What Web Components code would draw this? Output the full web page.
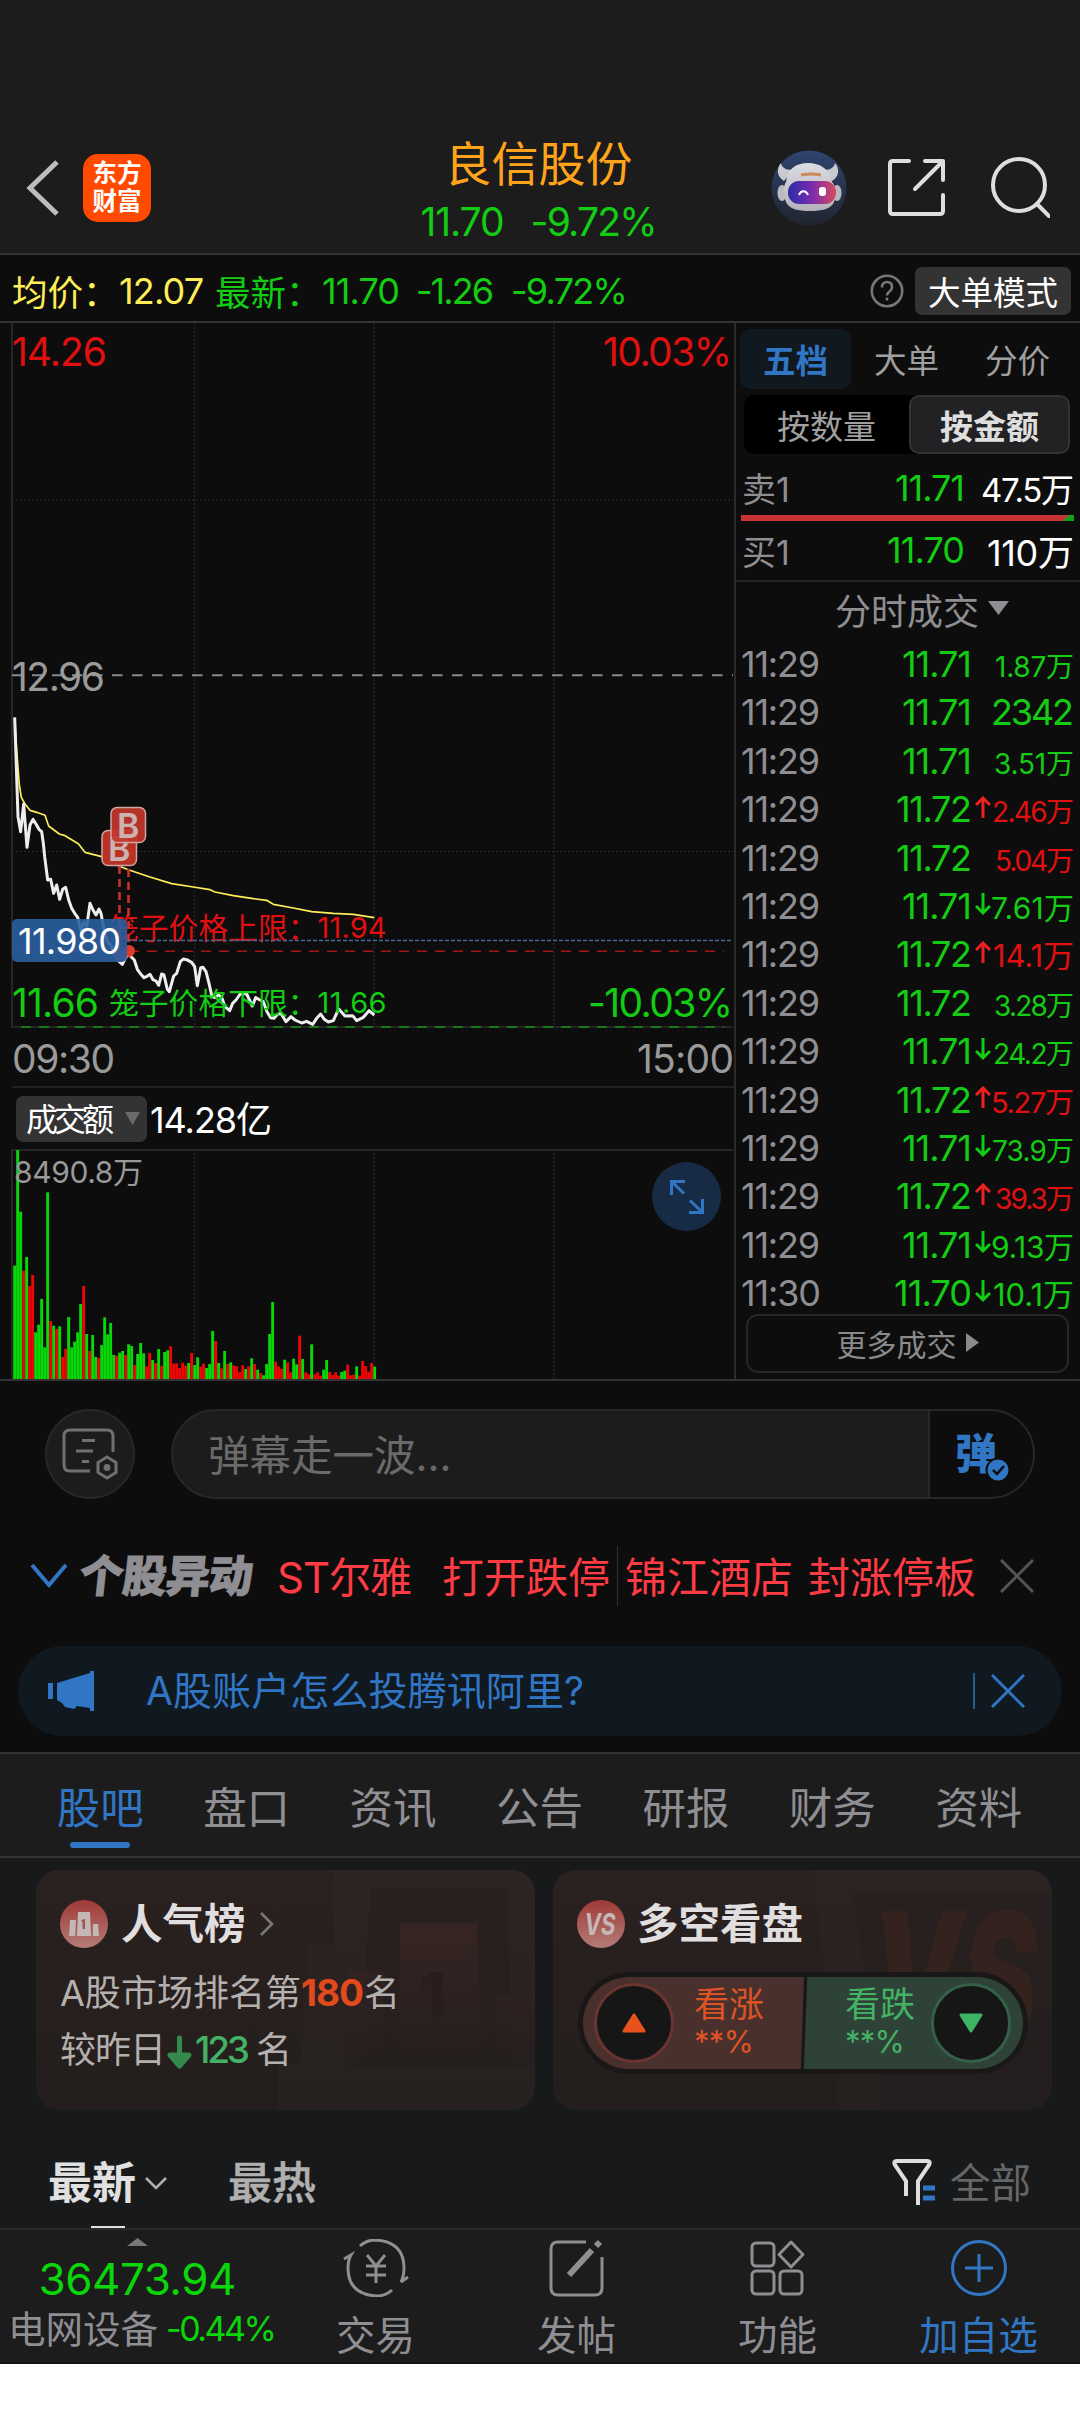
<!DOCTYPE html>
<html lang="zh-CN">
<head>
<meta charset="utf-8">
<title>良信股份</title>
<style>
  body {
    margin: 0;
    background: #fff;
    font-family: Inter, "Noto Sans CJK SC", sans-serif;
    --up: #e01010;
    --down: #14cc14;
    --blue: #3176c4;
    --line: #333;
    --grey: #8e8e93;
  }
</style>
</head>
<body>
<stock-page></stock-page>

<script>
const base = `
  :host { display: block; box-sizing: border-box; }
  * { box-sizing: border-box; }
  svg { display: block; flex: none; }
  fit-text, span { flex: none; white-space: nowrap; }
`;

function define(name, css, html) {
  const template = document.createElement('template');
  template.innerHTML = `<style>${base}${css}</style>${html}`;

  customElements.define(name, class extends HTMLElement {
    constructor() {
      super();
      this.attachShadow({ mode: 'open' });
      this.shadowRoot.appendChild(template.content.cloneNode(true));
    }
  });
}

/* ---------- header ---------- */

define('app-logo', `
  :host {
    display: flex;
    flex-direction: column;
    align-items: center;
    justify-content: center;
    width: 68px;
    height: 68px;
    padding-bottom: 4px;
    border-radius: 15px;
    background: #ff4a00;
    color: #fff;
    font: 700 24.500px/28px "Noto Sans CJK SC", sans-serif;
  }
`, `<span>东方</span><span>财富</span>`);

define('robot-avatar', `:host { width: 76px; height: 76px; }`, `
  <svg width="76" height="76" viewBox="0 0 76 76">
    <defs>
      <linearGradient id="sky" x2="0" y2="1"><stop stop-color="#2e4470"/><stop offset="1" stop-color="#20242e"/></linearGradient>
      <linearGradient id="visor"><stop stop-color="#2c2ca8"/><stop offset=".5" stop-color="#7a2cae"/><stop offset="1" stop-color="#d84a5e"/></linearGradient>
      <linearGradient id="shell" x2="0" y2="1"><stop stop-color="#dcdce2"/><stop offset="1" stop-color="#b4b2b8"/></linearGradient>
    </defs>
    <circle cx="38" cy="38" r="37.5" fill="url(#sky)"/>
    <path d="M10 13c-5 6-4 14 3 18l9-12c-6 2-11-1-12-6zM64 13c5 6 4 14-3 18l-9-12c6 2 11-1 12-6z" fill="#c9c9d0"/>
    <ellipse cx="11" cy="43" rx="4.500" ry="8" fill="#b9b9c2"/><ellipse cx="66" cy="43" rx="4.500" ry="8" fill="#b9b9c2"/>
    <path d="M15 32c1-13 10-19 22-19s22 6 24 19c4 4 5 13 2 20-3 7-12 9-24 9s-21-2-24-9c-3-7-3-16 0-20z" fill="url(#shell)"/>
    <rect x="17" y="31" width="48" height="23" rx="11" fill="url(#visor)"/>
    <path d="M30 25q10-2 20 0" fill="none" stroke="#c98b55" stroke-width="3"/>
    <path d="M28 45c2-5 7-5 9 0" fill="none" stroke="#fff" stroke-width="2"/>
    <rect x="48" y="37" width="7" height="9" rx="3" fill="#fff"/>
  </svg>
`);

define('stock-header', `
  :host {
    display: grid;
    grid-template-columns: 340px 1fr 340px;
    height: 255px;
    padding-top: 120px;
    background: #1c1c1c;
    border-bottom: 2px solid var(--line);
  }
  .left, .right { display: flex; align-items: center; height: 135px; }
  .left { padding-left: 25px; gap: 23px; }
  .right { padding-left: 31px; gap: 41px; }
  .mid { display: flex; flex-direction: column; align-items: center; padding-top: 17px; }
  .name { font-size: 47px; line-height: 54px; color: #ffa41a; margin-left: -3px; }
  .quote { display: flex; gap: 26px; margin: 11px 0 0 -2px; font-size: 39px; line-height: 40px; color: var(--down); }
`, `
  <div class="left">
    <svg width="35" height="58" viewBox="0 0 35 58"><path d="M32 3L5 29l27 26" fill="none" stroke="#bdbdbd" stroke-width="5"/></svg>
    <app-logo></app-logo>
  </div>
  <div class="mid">
    <div class="name">良信股份</div>
    <div class="quote"><fit-text w="84">11.70</fit-text><fit-text w="127">-9.72%</fit-text></div>
  </div>
  <div class="right">
    <robot-avatar></robot-avatar>
    <svg width="58" height="60" viewBox="0 0 58 60" fill="none" stroke="#dedede" stroke-width="4" stroke-linecap="round" stroke-linejoin="round">
      <path d="M21 3H5Q2 3 2 6V53q0 3 3 3H52q3 0 3-3V37M37 3H55V22M54 4L27 31"/>
    </svg>
    <svg width="60" height="62" viewBox="0 0 60 62" fill="none" stroke="#dedede" stroke-width="4" stroke-linecap="round" style="margin-left:3px">
      <circle cx="29" cy="28" r="26"/><path d="M47 47L59 59"/>
    </svg>
  </div>
`);

define('quote-bar', `
  :host {
    display: flex;
    align-items: center;
    height: 68px;
    padding: 5px 9px 0 12px;
    background: #0d0d0d;
    border-bottom: 2px solid var(--line);
    font-size: 36px;
    color: var(--down);
  }
  .avg { color: #ffee58; }
  .label { width: 107px; font-size: 35.5px; }
  .help { margin-left: auto; margin-right: 11px; }
  .mode {
    display: flex;
    align-items: center;
    justify-content: center;
    width: 156px;
    height: 48px;
    border-radius: 7px;
    background: #333;
    color: #fff;
    font-size: 32.5px;
  }
`, `
  <span class="label avg">均价：</span><fit-text class="avg" w="85">12.07</fit-text>
  <span class="label" style="margin-left:11px">最新：</span><fit-text w="78">11.70</fit-text>
  <fit-text w="78" style="margin-left:16px">-1.26</fit-text>
  <fit-text w="117" style="margin-left:17px">-9.72%</fit-text>
  <svg class="help" width="34" height="34" viewBox="0 0 34 34" fill="none" stroke="#777" stroke-width="2.6">
    <circle cx="17" cy="17" r="15.2"/>
    <path d="M12 13.5q0-5.500 5-5.500t5 5q0 2.500-2.500 4.500T17 21.500"/><path d="M17 23.600v3"/>
  </svg>
  <span class="mode">大单模式</span>
`);

/* ---------- charts ---------- */

define('price-chart', `
  :host { position: relative; height: 706px; }
  fit-text, .cage { position: absolute; font-size: 39px; line-height: 40px; }
  .up { color: var(--up); }
  .down { color: var(--down); }
  .mid { color: #9a9a9a; }
  .cage { display: flex; left: 109px; font-size: 29.8px; }
  .cage fit-text { position: static; font-size: 29px; }
  .tag {
    position: absolute;
    display: flex;
    align-items: center;
    left: 12px;
    top: 596px;
    width: 115px;
    height: 43px;
    padding-left: 6px;
    border-radius: 5px;
    background: rgba(42, 95, 160, .9);
    color: #fff;
  }
  .tag fit-text { position: static; font-size: 36px; }
  svg { position: absolute; left: 0; top: 0; }
`, `
  <svg width="734" height="706" viewBox="0 0 734 706" fill="none">
    <g stroke="#2b2b2b" stroke-width="1.200" stroke-dasharray="2 2">
      <path d="M194.500 0V704M374 0V704M554 0V704M12 177H733M12 528.500H733"/>
    </g>
    <path d="M12 0V704H733" stroke="#262626" stroke-width="2"/>
    <path d="M12 352.300H733" stroke="#8a8a8a" stroke-width="2" stroke-dasharray="10.500 9.500"/>
    <path d="M21 704H724" stroke="#187818" stroke-width="2" stroke-dasharray="10 8"/>
    <path d="M21 628.300H724" stroke="#a01818" stroke-width="1.600" stroke-dasharray="10 8"/>
    <g transform="translate(0 377) scale(.33333)">
      <path stroke="#ffee58" stroke-width="5" stroke-linejoin="round" d="M44 55L50 150 58 255 64 292 75 312 90 331 110 337 135 346 146 378 178 402 195 407 235 431 255 457 305 470 330 485 358 499 385 509 450 531 515 551 580 561 630 569 645 576 700 587 760 596 800 601 820 613 880 624 935 635 1000 640 1060 643 1123 653"/>
      <path stroke="#eee" stroke-width="9" stroke-linejoin="round" d="M44 52L46 110 50 230 54 350 62 395 71 312 81 442 90 375 99 358 108 372 117 388 125 395 130 430 134 470 143 540 152 538 161 580 170 555 179 598 188 568 197 562 206 600 215 625 224 640 233 652 242 690 251 668 260 680 270 610 279 630 288 645 297 627 303 640 312 690 322 725 332 735 345 765 358 785 367 793 378 770 388 765 403 780 412 808 422 822 432 833 441 829 450 823 459 839 468 843 476 856 485 822 492 825 502 868 508 875 521 828 530 820 541 785 550 777 560 779 575 787 584 800 592 857 602 803 609 802 618 815 627 850 636 890 645 893 655 885 665 892 675 920 689 932 698 910 708 900 722 880 740 882 757 918 767 893 780 900 790 905 801 935 812 953 822 955 832 943 843 940 858 965 873 950 885 960 905 969 920 964 938 973 950 955 962 942 973 958 985 966 1000 962 1010 940 1017 928 1035 948 1058 947 1070 962 1090 952 1107 932 1123 945"/>
    </g>
  </svg>
  <fit-text class="up" w="95" style="left:12px;top:9px">14.26</fit-text>
  <fit-text class="up" w="129" style="right:2px;top:9px">10.03%</fit-text>
  <fit-text class="mid" w="93" style="left:12px;top:334px">12.96</fit-text>
  <fit-text class="down" w="87" style="left:12px;top:660px">11.66</fit-text>
  <fit-text class="down" w="145" style="right:1px;top:660px">-10.03%</fit-text>
  <div class="cage up" style="top:585px"><span>笼子价格上限：</span><fit-text w="69">11.94</fit-text></div>
  <div class="cage down" style="top:660px"><span>笼子价格下限：</span><fit-text w="69">11.66</fit-text></div>
  <svg width="734" height="706" viewBox="0 0 734 706">
    <path d="M119.500 543V630M128.500 520V626" stroke="#c83228" stroke-width="2.600" stroke-dasharray="8 5"/>
    <circle cx="129" cy="628" r="6" fill="#e03a2a"/><circle cx="120" cy="633" r="6" fill="#c04050"/>
    <g font-family="Inter" font-weight="600" font-size="34" fill="#ccb2b0" text-anchor="middle">
      <rect x="102" y="507.500" width="34.500" height="35" rx="6" fill="#b93226" stroke="#cfa5a2" stroke-width="1.500"/>
      <text x="119.300" y="537.500">B</text>
      <rect x="111" y="484.500" width="34.500" height="35" rx="6" fill="#c2372b" fill-opacity=".93" stroke="#cfa5a2" stroke-width="1.500"/>
      <text x="128.300" y="514.500">B</text>
    </g>
  </svg>
  <div class="tag"><fit-text w="103">11.980</fit-text></div>
  <svg width="734" height="706" viewBox="0 0 734 706"><path d="M127 617.500H733" stroke="#44689c" stroke-width="1.500" stroke-dasharray="4 2"/></svg>
`);

// one bar per minute: the letter is the colour, the number the height
const volumes = `g340 g687 g502 r325 g366 r279 r312 g140 g163 g240 g95 g560 r174 g160 r150 g158 r66 r91 g186 g95
  g112 g140 g225 r279 g135 r84 g132 g66 r63 g102 g185 g134 g168 g72 r70 g79 g84 r72 g104 g99 r42 g75 g108 g77
  r38 r78 g57 r48 g90 r40 g81 g86 r98 r46 r47 r33 r49 r40 g48 r78 g42 g65 r37 r46 g33 g45 g144 r114 g48 r32
  g84 r45 g50 r41 r38 r21 r41 g30 r38 g62 r45 g28 r18 g11 g45 g135 g231 r52 r37 r30 g58 r50 r20 g61 g44 r130
  g60 r20 r14 g104 r14 r20 r10 g28 g57 r21 r12 r20 r10 g21 g25 r43 r11 r13 g38 r10 r54 r39 r22 r48 g37`.split(/\s+/);

class VolumeChart extends HTMLElement {
  constructor() {
    super();
    this.attachShadow({ mode: 'open' });
  }

  connectedCallback() {
    const bars = volumes.map((v, i) => {
      const h = v.slice(1) / 3;
      const fill = v[0] === 'g' ? '#08d808' : '#ee0505';
      return `<rect x="${13.2 + i * 3}" y="${230 - h}" width="2.9" height="${h}" fill="${fill}"/>`;
    }).join('');

    this.shadowRoot.innerHTML = `
      <style>${base}
        :host { position: relative; height: 230px; }
        fit-text { position: absolute; left: 14px; top: 6px; font-size: 30px; line-height: 34px; color: #999; }
        .expand { position: absolute; left: 652px; top: 13px; }
      </style>
      <svg width="734" height="230" viewBox="0 0 734 230" fill="none">
        <path d="M194.5 0V230M374 0V230M554 0V230" stroke="#2b2b2b" stroke-width="1.2" stroke-dasharray="2 2"/>
        <path d="M12 230V1H733" stroke="#262626" stroke-width="2"/>
        ${bars}
      </svg>
      <fit-text w="129">8490.8万</fit-text>
      <svg class="expand" width="69" height="69" viewBox="0 0 69 69" fill="none" stroke="#3176c4" stroke-width="3">
        <circle cx="34.5" cy="34.5" r="34.5" fill="#172c44" stroke="none"/>
        <path d="M19.500 33V19.500H33M20 20L32 31.500M50.500 37V50.500H37M50 50L38 38.500"/>
      </svg>
    `;
  }
}
customElements.define('volume-chart', VolumeChart);

define('chart-panel', `
  :host { width: 734px; }
  .times {
    display: flex;
    justify-content: space-between;
    height: 59px;
    margin-left: 12px;
    padding: 9px 0 0 0;
    border-bottom: 2px solid #222;
    font-size: 39px;
    line-height: 42px;
    color: #9a9a9a;
  }
  .metric { display: flex; align-items: center; height: 61px; padding: 0 0 0 16px; }
  .chip {
    display: flex;
    align-items: center;
    gap: 11px;
    width: 131px;
    height: 46px;
    padding-left: 10px;
    border-radius: 7px;
    background: #333;
    color: #fff;
    font-size: 32px;
  }
  .total { margin: -4px 0 0 3px; color: #fff; font-size: 36px; }
`, `
  <price-chart></price-chart>
  <div class="times"><fit-text w="103">09:30</fit-text><fit-text w="97">15:00</fit-text></div>
  <div class="metric">
    <span class="chip"><fit-text w="88" style="margin-top:-4px">成交额</fit-text><svg width="15" height="13" viewBox="0 0 15 13"><path d="M0 0H15L7.500 13z" fill="#6a6a6a"/></svg></span>
    <fit-text class="total" w="122">14.28亿</fit-text>
  </div>
  <volume-chart></volume-chart>
`);

/* ---------- order book ---------- */

class TradeRow extends HTMLElement {
  constructor() {
    super();
    this.attachShadow({ mode: 'open' });
  }

  connectedCallback() {
    const [time, price, dir, amount, side, size, width] = this.getAttribute('data').split(' ');
    const priceWidth = { '11.71': 70, '11.72': 76, '11.70': 78 }[price];
    const arrow = {
      up: '<path d="M8 22V2M1 9L8 2l7 7" stroke="#ee2020"/>',
      down: '<path d="M8 0V20M1 13L8 20l7-7" stroke="#14cc14"/>',
      none: ''
    }[dir];

    this.shadowRoot.innerHTML = `
      <style>${base}
        :host {
          display: flex;
          align-items: baseline;
          height: 48.4px;
          padding: 0 6px 0 5px;
          line-height: 48.4px;
          font-size: 36px;
          color: var(--grey);
        }
        .price { margin-left: auto; color: var(--down); }
        svg { width: 16px; height: 23px; margin: 0 0 0 3px; align-self: center; position: relative; top: -2px; }
        .amount { width: 83px; text-align: right; font-size: ${size}px; color: var(--${side}); }
      </style>
      <fit-text w="${time === '11:30' ? 80 : 79}">${time}</fit-text>
      <fit-text class="price" w="${priceWidth}">${price}</fit-text>
      <svg viewBox="0 0 16 23" fill="none" stroke-width="3">${arrow}</svg>
      <span class="amount"><fit-text w="${width}">${amount}</fit-text></span>
    `;
  }
}
customElements.define('trade-row', TradeRow);

define('order-panel', `
  :host { width: 346px; border-left: 2px solid #2a2a2a; }
  .tabs { display: flex; height: 66px; padding: 6px 0 0 4px; }
  .tabs span {
    display: flex;
    align-items: center;
    justify-content: center;
    width: 111px;
    height: 60px;
    padding-bottom: 2px;
    border-radius: 10px;
    font-size: 32.5px;
    color: #a0a0a0;
  }
  .tabs .on { background: #101820; color: var(--blue); font-weight: 600; }
  .seg { display: flex; width: 326px; height: 59px; margin: 6px 0 0 8px; border-radius: 10px; background: #000; }
  .seg span { display: flex; align-items: center; justify-content: center; width: 165px; font-size: 33px; color: #a0a0a0; }
  .seg .on { width: 161px; border: 2px solid #333335; border-radius: 10px; background: #222224; color: #dedede; font-weight: 600; }
  .level { display: flex; align-items: center; padding: 0 6px; font-size: 36px; height: 60px; color: var(--grey); }
  .level .p { width: 223px; text-align: right; }
  .level .k { font-size: 34px; width: 0; }
  .level .p { color: var(--down); }
  .level .v { margin-left: auto; color: #fff; font-size: 33px; }
  .head {
    display: flex;
    align-items: center;
    justify-content: center;
    gap: 9px;
    height: 60px;
    padding: 0 0 4px 28px;
    border-top: 2px solid #242424;
    font-size: 36px;
    color: var(--grey);
  }
  .more {
    display: flex;
    align-items: center;
    justify-content: center;
    gap: 9px;
    width: 323px;
    height: 59px;
    padding-bottom: 2px;
    margin: -3px 0 0 10px;
    border: 2px solid #262626;
    border-radius: 12px;
    font-size: 30px;
    color: #8a8a8a;
  }
`, `
  <div class="tabs"><span class="on">五档</span><span>大单</span><span>分价</span></div>
  <div class="seg"><span>按数量</span><span class="on">按金额</span></div>
  <div class="level" style="margin-top:3px;height:61px"><fit-text class="k">卖1</fit-text><span class="p"><fit-text w="70">11.71</fit-text></span><fit-text class="v" w="93">47.5万</fit-text></div>
  <svg width="333" height="6" viewBox="0 0 333 6" style="margin:-3px 0 0 5px"><path d="M0 0H333V6H0z" fill="#c83333"/><path d="M328 0H333V6H322z" fill="#14a014"/></svg>
  <div class="level" style="height:58px"><fit-text class="k">买1</fit-text><span class="p"><fit-text w="78">11.70</fit-text></span><fit-text class="v" w="87" style="font-size:36px">110万</fit-text></div>
  <div class="head" style="margin-top:1px">分时成交<svg width="21" height="14" viewBox="0 0 21 14" style="margin-top:-2px"><path d="M0 0H21L10.500 14z" fill="#8e8e93"/></svg></div>
  <trade-row data="11:29 11.71 none 1.87万 down 28 79"></trade-row>
  <trade-row data="11:29 11.71 none 2342 down 36 83"></trade-row>
  <trade-row data="11:29 11.71 none 3.51万 down 28 80"></trade-row>
  <trade-row data="11:29 11.72 up 2.46万 up 28 82"></trade-row>
  <trade-row data="11:29 11.72 none 5.04万 up 28 79"></trade-row>
  <trade-row data="11:29 11.71 down 7.61万 down 30 83"></trade-row>
  <trade-row data="11:29 11.72 up 14.1万 up 31 81"></trade-row>
  <trade-row data="11:29 11.72 none 3.28万 down 28 80"></trade-row>
  <trade-row data="11:29 11.71 down 24.2万 down 28 81"></trade-row>
  <trade-row data="11:29 11.72 up 5.27万 up 29 83"></trade-row>
  <trade-row data="11:29 11.71 down 73.9万 down 28 82"></trade-row>
  <trade-row data="11:29 11.72 up 39.3万 up 28 79"></trade-row>
  <trade-row data="11:29 11.71 down 9.13万 down 30 83"></trade-row>
  <trade-row data="11:30 11.70 down 10.1万 down 31 81"></trade-row>
  <div class="more">更多成交<svg width="13" height="19" viewBox="0 0 13 19"><path d="M0 0L13 9.500 0 19z" fill="#8a8a8a"/></svg></div>
`);

define('market-board', `
  :host { display: flex; height: 1058px; background: #0d0d0d; border-bottom: 2px solid var(--line); }
`, `<chart-panel></chart-panel><order-panel></order-panel>`);

/* ---------- comment and news bars ---------- */

define('danmaku-bar', `
  :host { display: flex; gap: 36px; height: 118px; padding: 28px 45px 0; }
  .set { display: flex; align-items: center; justify-content: center; width: 90px; height: 90px; border: 2px solid #272727; border-radius: 50%; background: #1c1c1c; }
  .box { display: flex; width: 864px; height: 90px; border: 2px solid #272727; border-radius: 45px; background: #1c1c1c; overflow: hidden; }
  .box span { width: 755px; padding-left: 35px; font-size: 41.500px; line-height: 90px; color: #6a6a6a; }
  .send { display: flex; position: relative; flex: 1; padding-left: 25px; background: #0d0d0d; border-left: 2px solid #272727; font: 900 42px/79px "Noto Sans CJK SC", sans-serif; color: var(--blue); }
  .send svg { position: absolute; left: 55px; top: 46px; }
`, `
  <div class="set">
    <svg width="56" height="52" viewBox="0 0 56 52" fill="none" stroke="#707070" stroke-width="3">
      <path d="M51 24V8q0-6-6-6H8Q2 2 2 8V37q0 6 6 6H28M20 12.500H33M14 23H31M20 33.500H27"/>
      <path d="M45 29l9 5.500v10L45 50l-9-5.500v-10z"/><circle cx="45" cy="39.500" r="2" fill="#707070"/>
    </svg>
  </div>
  <div class="box">
    <span>弹幕走一波...</span>
    <div class="send">弹<svg width="26" height="26" viewBox="0 0 26 26"><circle cx="13" cy="13" r="11.500" fill="#3176c4" stroke="#0d0d0d" stroke-width="2"/><path d="M8 13l4 4 7-8" fill="none" stroke="#0d0d0d" stroke-width="2.500"/></svg></div>
  </div>
`);

define('ticker-bar', `
  :host { display: flex; align-items: center; height: 156px; padding: 0 46px 2px 30px; color: #ff3b44; font-size: 42px; }
  .title { width: 186px; margin: -6px 0 0 12px; font-weight: 900; font-size: 44px; letter-spacing: -.8px; transform: skewX(-6deg); -webkit-text-stroke: 1px var(--grey); color: var(--grey); }
  .red { margin-top: -3px; }
  .bar { width: 1px; height: 60px; margin: 0 7px; background: #303030; }
`, `
  <svg width="38" height="26" viewBox="0 0 38 26"><path d="M2 2l17 20L36 2" fill="none" stroke="#3176c4" stroke-width="4"/></svg>
  <span class="title">个股异动</span>
  <fit-text class="red" w="135" style="margin-left:11px">ST尔雅</fit-text>
  <span class="red" style="margin-left:30px">打开跌停</span>
  <span class="bar"></span>
  <span class="red">锦江酒店</span>
  <span class="red" style="margin-left:15px">封涨停板</span>
  <svg width="34" height="34" viewBox="0 0 34 34" style="margin-left:auto"><path d="M1 1l32 32M33 1L1 33" stroke="#555" stroke-width="3"/></svg>
`);

define('notice-bar', `
  :host { display: flex; align-items: center; height: 90px; margin: 0 18px; padding: 0 37px 0 30px; border-radius: 45px; background: #101820; color: var(--blue); font-size: 39px; }
  .bar { width: 2px; height: 36px; margin-left: auto; margin-right: 16px; background: #2a5c94; }
`, `
  <svg width="46" height="40" viewBox="0 0 46 40" fill="#3176c4"><path d="M0 12h5v16H0zM9 12L42 2V0h4v40h-4v-3l-13-2-3 3-9-2-3-4-5-3z"/></svg>
  <fit-text w="438" style="margin:-6px 0 0 52px">A股账户怎么投腾讯阿里?</fit-text>
  <span class="bar"></span>
  <svg width="34" height="34" viewBox="0 0 34 34"><path d="M1 1l32 32M33 1L1 33" stroke="#3176c4" stroke-width="3"/></svg>
`);

define('tab-strip', `
  :host { display: flex; height: 106px; margin-top: 16px; padding: 0 28px 0 27px; background: #1c1c1c; border-top: 2px solid var(--line); border-bottom: 2px solid var(--line); }
  span { position: relative; flex: 1; text-align: center; font-size: 43.500px; line-height: 109px; color: var(--grey); }
  .on { color: var(--blue); }
  .on::after { content: ""; position: absolute; left: 50%; top: 88px; width: 60px; height: 6px; margin-left: -30px; border-radius: 3px; background: var(--blue); }
`, `<span class="on">股吧</span><span>盘口</span><span>资讯</span><span>公告</span><span>研报</span><span>财务</span><span>资料</span>`);

/* ---------- cards ---------- */

const cardCss = `
  :host { position: relative; overflow: hidden; flex: none; width: 499px; height: 240px; padding: 30px 24px 0; border-radius: 23px; background: linear-gradient(#2a2120, #231e1d); }
  .bg { position: absolute; left: 0; top: 0; }
  .title { display: flex; align-items: center; position: relative; height: 48px; font-size: 41.500px; line-height: 44px; font-weight: 600; color: #e0dede; }
  .title span { margin-top: -1px; }
  .title svg { margin-right: 13px; }
`;

define('rank-card', `
  ${cardCss}
  .line { display: flex; align-items: baseline; position: relative; height: 57px; line-height: 57px; font-size: 36px; color: #b4b0ae; }
`, `
  <svg class="bg" width="499" height="240" viewBox="0 0 499 240">
    <defs><linearGradient id="f" x2="0" y2="1"><stop stop-color="#3a2624"/><stop offset="1" stop-color="#241e1e"/></linearGradient></defs>
    <path d="M298 0H499V240H242V38H295z" fill="#fff" opacity=".015"/>
    <path d="M335 17H472L476 196H330V75H273L265 193H243V38L298 36V75H331z" fill="#000" opacity=".07"/>
    <path d="M312 101H349L346 196H309zM364 53H441L446 196H362zM459 125H499V196H461z" fill="url(#f)" opacity=".8"/>
    <text x="383" y="147" font-family="Inter" font-weight="800" font-size="62" fill="#281e1e">1</text>
  </svg>
  <div class="title">
    <svg width="48" height="48" viewBox="0 0 48 48">
      <defs><linearGradient id="c" x2="0" y2="1"><stop stop-color="#a03a36"/><stop offset="1" stop-color="#b47c78"/></linearGradient></defs>
      <circle cx="24" cy="24" r="24" fill="url(#c)"/>
      <path d="M10 20h6l-1 16H9zM18 12h12l1 24H17zM33 24h5l1 12h-6z" fill="#c4b8b6"/>
      <path d="M21 20l4-1v10h-2.500V22z" fill="#a05450"/>
    </svg><span>人气榜</span><svg width="14" height="24" viewBox="0 0 14 24" style="margin-left:14px"><path d="M1 1l11 11L1 23" fill="none" stroke="#777" stroke-width="2.600"/></svg>
  </div>
  <div class="line" style="margin-top:16px"><fit-text w="241">A股市场排名第</fit-text><fit-text w="63" style="color:#e04a1c;font-weight:700;font-size:37px">180</fit-text><span>名</span></div>
  <div class="line"><fit-text w="106">较昨日</fit-text><svg width="25" height="34" viewBox="0 0 25 34" style="margin:0 3px 0 1px;align-self:center;position:relative;top:2px"><path d="M12.500 3V20M3 20H22L12.500 31z" stroke="#338a4c" stroke-width="5" stroke-linejoin="round" stroke-linecap="round" fill="#338a4c"/></svg><fit-text w="55" style="color:#43b264;font-weight:500;font-size:37px">123</fit-text><span style="margin-left:6px">名</span></div>
`);

define('vote-card', `
  ${cardCss}
  .title svg { margin-right: 12px; }
  .vote { display: flex; align-items: center; position: absolute; left: 25px; top: 102px; width: 450px; height: 102px; padding: 5px; border-radius: 51px; background: #191718; }
  .side { display: flex; align-items: center; height: 92px; gap: 20px; }
  .rise { width: 221px; padding-left: 11px; border-radius: 46px 0 0 46px; background: #4a302d; color: #dc5426; clip-path: polygon(0 0, 100% 0, 98.500% 100%, 0 100%); }
  .fall { width: 219px; padding-left: 41px; border-radius: 0 46px 46px 0; background: #2f4237; color: #43b264; clip-path: polygon(1.500% 0, 100% 0, 100% 100%, 0 100%); }
  .btn { display: flex; align-items: center; justify-content: center; width: 80px; height: 80px; border-radius: 50%; border: 3px solid; background: #161617; flex: none; }
  .txt { display: flex; flex-direction: column; font-size: 35px; line-height: 38px; margin-top: -1px; }
  .txt fit-text { font-size: 31px; }
`, `
  <svg class="bg" width="499" height="240" viewBox="0 0 499 240">
    <path d="M260 0H499V240H285z" fill="#fff" opacity=".012"/>
    <path d="M300 22H499V240H330z" fill="#000" opacity=".06"/>
    <text x="318" y="172" font-family="Inter" font-weight="900" font-style="italic" font-size="180" textLength="166" lengthAdjust="spacingAndGlyphs" fill="#34221f">VS</text>
  </svg>
  <div class="title">
    <svg width="48" height="48" viewBox="0 0 48 48">
      <defs><linearGradient id="c" x2="0" y2="1"><stop stop-color="#a03a36"/><stop offset="1" stop-color="#b47c78"/></linearGradient></defs>
      <circle cx="24" cy="24" r="24" fill="url(#c)"/>
      <text x="23" y="35" text-anchor="middle" font-family="Inter" font-weight="700" font-style="italic" font-size="30" textLength="31" lengthAdjust="spacingAndGlyphs" fill="#c4b8b6">VS</text>
    </svg><span>多空看盘</span>
  </div>
  <div class="vote">
    <div class="side rise"><span class="btn" style="border-color:#6a3430"><svg width="24" height="20" viewBox="0 0 24 20"><path d="M12 2L22 18H2z" fill="#e8521c" stroke="#e8521c" stroke-width="3" stroke-linejoin="round"/></svg></span>
      <span class="txt"><span>看涨</span><fit-text w="60">**%</fit-text></span></div>
    <div class="side fall"><span class="txt"><span>看跌</span><fit-text w="60">**%</fit-text></span>
      <span class="btn" style="border-color:#34604a;margin-left:-4px"><svg width="24" height="20" viewBox="0 0 24 20"><path d="M12 18L22 2H2z" fill="#3cb464" stroke="#3cb464" stroke-width="3" stroke-linejoin="round"/></svg></span></div>
  </div>
`);

define('feed-filter', `
  :host { display: flex; align-items: center; height: 118px; padding: 28px 49px 0 48px; font-size: 44px; line-height: 52px; font-weight: 500; color: #b0b0b0; }
  .on { position: relative; color: #e0e0e0; font-weight: 600; }
  .on::after { content: ""; position: absolute; left: 43px; bottom: -19px; width: 34px; height: 2px; background: #e0e0e0; }
  .hot { -webkit-text-stroke: .5px; }
  .all { font-size: 40.500px; font-weight: 400; color: #666; margin: 1px 0 0 14px; }
`, `
  <span class="on">最新</span>
  <svg width="22" height="14" viewBox="0 0 22 14" style="margin-left:9px"><path d="M1 2l10 10L21 2" fill="none" stroke="#b0b0b0" stroke-width="2.500"/></svg>
  <span class="hot" style="margin-left:61px">最热</span>
  <svg width="44" height="48" viewBox="0 0 44 48" fill="none" style="margin-left:auto">
    <path d="M14 37V22L3 6Q1 2 5 2H35q4 0 2 4L26 22V46" stroke="#dedede" stroke-width="4"/>
    <path d="M31 29H43M31 39H43" stroke="#3176c4" stroke-width="5"/>
  </svg>
  <span class="all">全部</span>
`);

/* ---------- bottom bar ---------- */

define('nav-item', `
  :host { display: flex; flex-direction: column; align-items: center; width: 201px; color: var(--grey); font-size: 39.500px; line-height: 48px; }
  .icon { height: 58px; margin: 9px 0 15px; }
`, `<div class="icon"><slot name="icon"></slot></div><slot></slot>`);

define('bottom-bar', `
  :host { display: flex; height: 136px; background: #1c1c1c; border-top: 2px solid #2a2a2a; border-bottom: 2px solid #111; }
  .index { display: flex; flex-direction: column; align-items: center; width: 275px; padding: 8px 0 0; color: #0ad60a; }
  .num { font-size: 44px; line-height: 52px; margin-top: 7px; }
  .sector { display: flex; align-items: center; gap: 8px; align-self: flex-start; margin-left: 8px; height: 46px; font-size: 34px; }
  .sector span { font-size: 37.500px; margin-top: -3px; color: var(--grey); }
  svg { fill: none; stroke: var(--grey); stroke-width: 3; }
`, `
  <div class="index">
    <svg width="21" height="8" viewBox="0 0 21 8"><path d="M0 8L10.500 0 21 8z" fill="#777" stroke="none"/></svg>
    <fit-text class="num" w="198">36473.94</fit-text>
    <div class="sector"><span>电网设备</span><fit-text w="111">-0.44%</fit-text></div>
  </div>
  <nav-item>
    <svg slot="icon" width="66" height="58" viewBox="0 0 66 58"><path d="M17 7Q23 1 33 1q28 2 28 28 0 8-3 14l7-5M49 51q-6 6-16 6Q5 55 5 29q0-8 3-13l-7 4M24 16l9 11 9-11M33 27V44M23 27H43M23 36H43"/></svg>交易
  </nav-item>
  <nav-item>
    <svg slot="icon" width="56" height="58" viewBox="0 0 56 58"><path d="M37 3H9Q2 3 2 10V49q0 7 7 7H46q7 0 7-7V18"/><path d="M20 36L43 11M47 7l4-4" stroke-width="6"/></svg>发帖
  </nav-item>
  <nav-item>
    <svg slot="icon" width="56" height="58" viewBox="0 0 56 58"><rect x="2" y="4" width="22" height="23" rx="4"/><rect x="2" y="32" width="22" height="23" rx="4"/><rect x="30" y="32" width="22" height="23" rx="4"/><path d="M41 3L53 15.500 41 28 29 15.500z" stroke-linejoin="round"/></svg>功能
  </nav-item>
  <nav-item style="color:var(--blue)">
    <svg slot="icon" width="56" height="58" viewBox="0 0 56 58" style="stroke:var(--blue)"><circle cx="28" cy="29" r="26.500"/><path d="M28 15V43M14 29H42"/></svg>加自选
  </nav-item>
`);

define('stock-page', `
  :host { width: 1080px; height: 2364px; background: #0d0d0d; overflow: hidden; }
  .feed { height: 370px; padding: 12px 28px 0 36px; background: #18191b; }
  .cards { display: flex; gap: 18px; }
  feed-filter { margin: 0 -28px 0 -36px; }
`, `
  <stock-header></stock-header>
  <quote-bar></quote-bar>
  <market-board></market-board>
  <danmaku-bar></danmaku-bar>
  <ticker-bar></ticker-bar>
  <notice-bar style="margin-top:-9px"></notice-bar>
  <tab-strip></tab-strip>
  <div class="feed">
    <div class="cards"><rank-card></rank-card><vote-card></vote-card></div>
    <feed-filter></feed-filter>
  </div>
  <bottom-bar></bottom-bar>
`);

// Sets the tracking of its text so that it takes the width given in "w".
// Registered last: it measures, so the elements around it must be in place.
class FitText extends HTMLElement {
  constructor() {
    super();
    this.attachShadow({ mode: 'open' });
    this.shadowRoot.innerHTML = `
      <style>:host { display: inline-block; white-space: nowrap; } span { display: inline-block; }</style>
      <span><slot></slot></span>
    `;
  }

  connectedCallback() {
    const width = Number(this.getAttribute('w'));
    if (!width) return;
    const span = this.shadowRoot.querySelector('span');
    const gap = (width - span.getBoundingClientRect().width) / (this.textContent.length - 1);
    span.style.letterSpacing = gap + 'px';
    span.style.marginRight = -gap + 'px';
  }
}
customElements.define('fit-text', FitText);
</script>
</body>
</html>
